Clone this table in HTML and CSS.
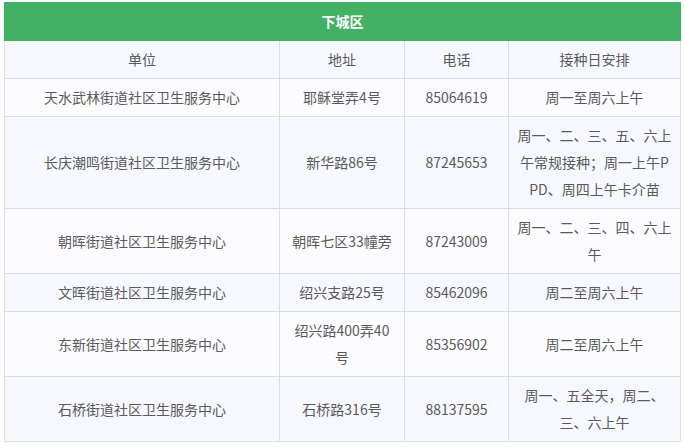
FILE: index.html
```html
<!DOCTYPE html>
<html lang="zh-CN">
<head>
<meta charset="utf-8">
<title>下城区</title>
<link rel="stylesheet" href="styles.css">
</head>
<body>
<table class="tbl">
  <colgroup>
    <col class="c1"><col class="c2"><col class="c3"><col class="c4">
  </colgroup>
  <thead>
    <tr><th class="title" colspan="4">下城区</th></tr>
    <tr class="alt"><td>单位</td><td>地址</td><td>电话</td><td>接种日安排</td></tr>
  </thead>
  <tbody>
    <tr><td>天水武林街道社区卫生服务中心</td><td>耶稣堂弄4号</td><td>85064619</td><td>周一至周六上午</td></tr>
    <tr class="alt"><td>长庆潮鸣街道社区卫生服务中心</td><td>新华路86号</td><td>87245653</td><td>周一、二、三、五、六上午常规接种；周一上午PPD、周四上午卡介苗</td></tr>
    <tr><td>朝晖街道社区卫生服务中心</td><td>朝晖七区33幢旁</td><td>87243009</td><td>周一、二、三、四、六上午</td></tr>
    <tr class="alt"><td>文晖街道社区卫生服务中心</td><td>绍兴支路25号</td><td>85462096</td><td>周二至周六上午</td></tr>
    <tr><td>东新街道社区卫生服务中心</td><td>绍兴路400弄40号</td><td>85356902</td><td>周二至周六上午</td></tr>
    <tr class="alt"><td>石桥街道社区卫生服务中心</td><td>石桥路316号</td><td>88137595</td><td>周一、五全天，周二、三、六上午</td></tr>
  </tbody>
</table>
</body>
</html>
```
FILE: styles.css
```css
html, body {
  margin: 0;
  padding: 0;
  background: #ffffff;
}
body {
  padding: 2px 0 0 4px;
  font-family: "Noto Sans CJK SC", "Noto Sans", sans-serif;
  font-size: 14px;
  color: #5a5a5a;
}
.tbl {
  border-collapse: collapse;
  table-layout: fixed;
  width: 677px;
}
.c1 { width: 275px; }
.c2 { width: 125px; }
.c3 { width: 104px; }
.c4 { width: 172px; }
.tbl td, .tbl th {
  border: 1px solid #dcdee3;
  padding: 5px 8px;
  line-height: 27px;
  text-align: center;
  vertical-align: middle;
  word-break: break-all;
  background: #fcfcfe;
}
.tbl tr.alt td {
  background: #f6f8fd;
}
.tbl th.title {
  background: #42b163;
  border-color: #42b163;
  color: #ffffff;
  font-weight: bold;
}
```
